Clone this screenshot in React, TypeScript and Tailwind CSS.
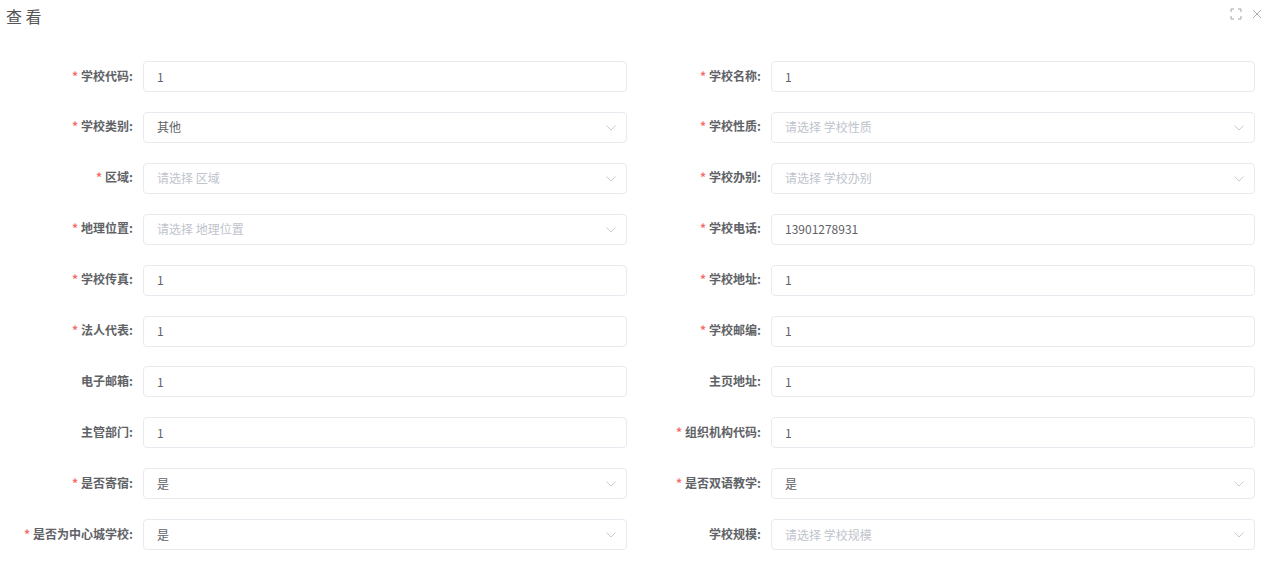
const font = { fontFamily: '"Noto Sans CJK SC", "Noto Sans", sans-serif' };

type Field = {
  label: string;
  required?: boolean;
  value?: string;
  placeholder?: string;
  select?: boolean;
};

const fields: Field[] = [
  { label: "学校代码", required: true, value: "1" },
  { label: "学校名称", required: true, value: "1" },
  { label: "学校类别", required: true, value: "其他", select: true },
  { label: "学校性质", required: true, placeholder: "请选择 学校性质", select: true },
  { label: "区域", required: true, placeholder: "请选择 区域", select: true },
  { label: "学校办别", required: true, placeholder: "请选择 学校办别", select: true },
  { label: "地理位置", required: true, placeholder: "请选择 地理位置", select: true },
  { label: "学校电话", required: true, value: "13901278931" },
  { label: "学校传真", required: true, value: "1" },
  { label: "学校地址", required: true, value: "1" },
  { label: "法人代表", required: true, value: "1" },
  { label: "学校邮编", required: true, value: "1" },
  { label: "电子邮箱", value: "1" },
  { label: "主页地址", value: "1" },
  { label: "主管部门", value: "1" },
  { label: "组织机构代码", required: true, value: "1" },
  { label: "是否寄宿", required: true, value: "是", select: true },
  { label: "是否双语教学", required: true, value: "是", select: true },
  { label: "是否为中心城学校", required: true, value: "是", select: true },
  { label: "学校规模", placeholder: "请选择 学校规模", select: true },
];

function Row({ f }: { f: Field }) {
  return (
    <div className="flex h-[31px] items-center">
      <div className="mb-[2px] flex w-[133px] shrink-0 items-center justify-end text-[12px] font-bold text-[#606266]">
        {f.required && <span className="mr-[3px] text-[12px] font-bold text-[#f56c6c]">*</span>}
        <span>{f.label}:</span>
      </div>
      <div className="relative ml-[10px] flex h-[31px] w-[484px] items-center rounded-[4px] border border-[#e8eaf0] bg-white pl-[13px] text-[12px]">
        {f.value ? (
          <span className="text-[#606266]">{f.value}</span>
        ) : (
          <span className="text-[#c0c4cc]">{f.placeholder}</span>
        )}
        {f.select && (
          <svg className="absolute right-[10px] top-[11px]" width="10" height="8" viewBox="0 0 10 8" fill="none">
            <path d="M0.5 1.5 L5 6 L9.5 1.5" stroke="#c8ccd4" strokeWidth="1" />
          </svg>
        )}
      </div>
    </div>
  );
}

export default function App() {
  return (
    <div className="h-[562px] w-[1269px] overflow-hidden bg-white" style={font}>
      <div className="flex h-[61.05px] items-start justify-between">
        <h1 className="ml-[6px] mt-[4px] text-[16px] leading-[24px] text-[#555555]">查 看</h1>
        <div className="mr-[7px] mt-[8px] flex items-center gap-[10px]">
          <svg width="12" height="12" viewBox="0 0 12 12" fill="none" stroke="#a0a4ac" strokeWidth="1">
            <path d="M1 4V1H4M8 1H11V4M11 8V11H8M4 11H1V8" />
          </svg>
          <svg width="10" height="10" viewBox="0 0 10 10" fill="none" stroke="#a0a4ac" strokeWidth="0.9">
            <path d="M1 1L9 9M9 1L1 9" />
          </svg>
        </div>
      </div>
      <div className="grid w-[1256px] grid-cols-2 gap-y-[19.9px]">
        {fields.map((f) => (
          <Row key={f.label} f={f} />
        ))}
      </div>
    </div>
  );
}
